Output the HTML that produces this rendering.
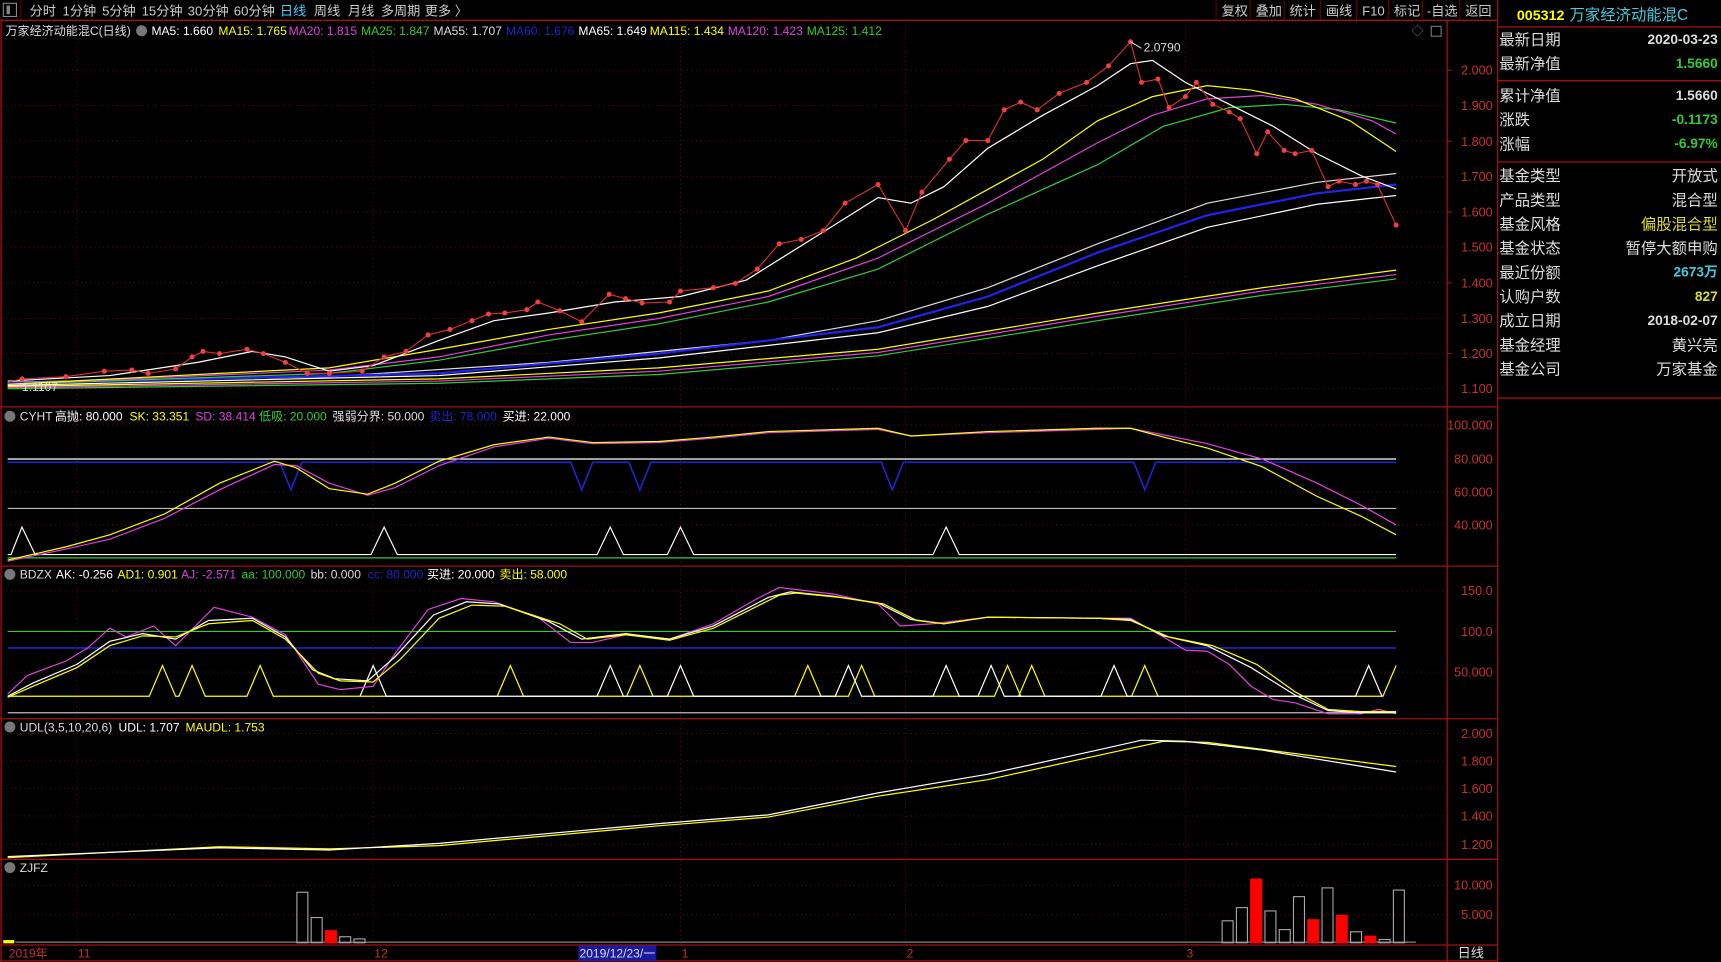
<!DOCTYPE html>
<html><head><meta charset="utf-8"><style>
html,body{margin:0;padding:0;background:#000;width:1721px;height:962px;overflow:hidden}
svg{display:block}
text{font-family:"Liberation Sans","Noto Sans CJK SC",sans-serif}
</style></head><body>
<svg width="1721" height="962" viewBox="0 0 1568 876" preserveAspectRatio="none" xmlns="http://www.w3.org/2000/svg">
<rect width="1568" height="876" fill="#000"/>
<!-- top bar -->
<rect x="0" y="0" width="1364" height="18" fill="#000"/>
<rect x="3" y="3" width="12" height="12" fill="none" stroke="#888" stroke-width="1"/>
<rect x="6" y="5" width="3" height="8" fill="#888"/>
<line x1="19" y1="0" x2="19" y2="18" stroke="#600"/>
<g font-size="12" fill="#ccc">
<text x="27" y="14">分时</text><text x="57" y="14">1分钟</text><text x="93" y="14">5分钟</text><text x="129" y="14">15分钟</text><text x="171" y="14">30分钟</text><text x="213" y="14">60分钟</text>
<text x="255" y="14" fill="#4cf">日线</text><text x="286" y="14">周线</text><text x="317" y="14">月线</text><text x="347" y="14">多周期</text><text x="387" y="14">更多 〉</text>
<text x="1113" y="14">复权</text><text x="1144" y="14">叠加</text><text x="1175" y="14">统计</text><text x="1208" y="14">画线</text><text x="1241" y="14">F10</text><text x="1270" y="14">标记</text><text x="1300" y="14">-自选</text><text x="1335" y="14">返回</text>
</g>
<g stroke="#600"><line x1="1108" y1="0" x2="1108" y2="18"/><line x1="1139" y1="0" x2="1139" y2="18"/><line x1="1170" y1="0" x2="1170" y2="18"/><line x1="1203" y1="0" x2="1203" y2="18"/><line x1="1236" y1="0" x2="1236" y2="18"/><line x1="1265" y1="0" x2="1265" y2="18"/><line x1="1296" y1="0" x2="1296" y2="18"/><line x1="1330" y1="0" x2="1330" y2="18"/></g>
<!-- frame lines -->
<g stroke="#a01010" stroke-width="1.2" fill="none">
<line x1="0" y1="18.5" x2="1364" y2="18.5"/>
<line x1="1" y1="18" x2="1" y2="876"/>
<line x1="1318.5" y1="18" x2="1318.5" y2="876"/>
<line x1="1364.5" y1="0" x2="1364.5" y2="876"/>
<line x1="0" y1="370.5" x2="1364" y2="370.5"/>
<line x1="0" y1="515.5" x2="1364" y2="515.5"/>
<line x1="0" y1="654.5" x2="1364" y2="654.5"/>
<line x1="0" y1="782.5" x2="1364" y2="782.5"/>
<line x1="0" y1="860.5" x2="1364" y2="860.5"/>
<line x1="0" y1="875" x2="1364" y2="875"/>
<line x1="1364" y1="24.5" x2="1568" y2="24.5"/>
<line x1="1364" y1="73.5" x2="1568" y2="73.5"/>
<line x1="1364" y1="147.5" x2="1568" y2="147.5"/>
<line x1="1364" y1="362.5" x2="1568" y2="362.5"/>
</g>
<!-- grid -->
<g stroke="#6a1010" stroke-width="0.8" stroke-dasharray="1,3">
<line x1="70" y1="19" x2="70" y2="860"/><line x1="340" y1="19" x2="340" y2="860"/><line x1="620" y1="19" x2="620" y2="860"/><line x1="825" y1="19" x2="825" y2="860"/><line x1="1080" y1="19" x2="1080" y2="860"/>
<line x1="2" y1="64" x2="1318" y2="64"/><line x1="2" y1="96" x2="1318" y2="96"/><line x1="2" y1="128.5" x2="1318" y2="128.5"/><line x1="2" y1="161" x2="1318" y2="161"/><line x1="2" y1="193" x2="1318" y2="193"/><line x1="2" y1="225" x2="1318" y2="225"/><line x1="2" y1="257.5" x2="1318" y2="257.5"/><line x1="2" y1="290" x2="1318" y2="290"/><line x1="2" y1="322" x2="1318" y2="322"/><line x1="2" y1="354" x2="1318" y2="354"/>
<line x1="2" y1="387" x2="1318" y2="387"/><line x1="2" y1="448" x2="1318" y2="448"/><line x1="2" y1="478" x2="1318" y2="478"/>
<line x1="2" y1="538" x2="1318" y2="538"/><line x1="2" y1="612" x2="1318" y2="612"/>
<line x1="2" y1="668" x2="1318" y2="668"/><line x1="2" y1="693" x2="1318" y2="693"/><line x1="2" y1="718" x2="1318" y2="718"/><line x1="2" y1="743" x2="1318" y2="743"/><line x1="2" y1="769" x2="1318" y2="769"/>
<line x1="2" y1="806" x2="1318" y2="806"/><line x1="2" y1="833" x2="1318" y2="833"/>
</g>
<!-- axis labels -->
<g font-size="11.5" fill="#c83030" text-anchor="end">
<text x="1360" y="68">2.000</text><text x="1360" y="100">1.900</text><text x="1360" y="133">1.800</text><text x="1360" y="165">1.700</text><text x="1360" y="197">1.600</text><text x="1360" y="229">1.500</text><text x="1360" y="262">1.400</text><text x="1360" y="294">1.300</text><text x="1360" y="326">1.200</text><text x="1360" y="358">1.100</text>
<text x="1360" y="391">100.000</text><text x="1360" y="422">80.000</text><text x="1360" y="452">60.000</text><text x="1360" y="482">40.000</text>
<text x="1360" y="542">150.0</text><text x="1360" y="579">100.0</text><text x="1360" y="616">50.000</text>
<text x="1360" y="672">2.000</text><text x="1360" y="697">1.800</text><text x="1360" y="722">1.600</text><text x="1360" y="747">1.400</text><text x="1360" y="773">1.200</text>
<text x="1360" y="810">10.000</text><text x="1360" y="837">5.000</text>
</g>
<g stroke="#a01010"><line x1="1318" y1="64" x2="1323" y2="64"/><line x1="1318" y1="128.5" x2="1323" y2="128.5"/><line x1="1318" y1="193" x2="1323" y2="193"/><line x1="1318" y1="257.5" x2="1323" y2="257.5"/><line x1="1318" y1="322" x2="1323" y2="322"/></g>
<!-- bottom axis -->
<g font-size="11" fill="#c83030"><text x="8" y="872">2019年</text><text x="71" y="872">11</text><text x="341" y="872">12</text><text x="621" y="872">1</text><text x="826" y="872">2</text><text x="1081" y="872">3</text></g>
<rect x="527" y="861" width="71" height="14" fill="#1a1aa0"/>
<text x="528" y="872" font-size="11" fill="#ddd">2019/12/23/一</text>
<text x="1328" y="872" font-size="12" fill="#ddd">日线</text>
<!-- main header -->
<g font-size="11">
<text x="5" y="32" fill="#ddd">万家经济动能混C(日线)</text>
<circle cx="129" cy="28" r="5" fill="#777"/>
<text x="138" y="32" fill="#fff">MA5: 1.660</text><text x="199" y="32" fill="#ff0">MA15: 1.765</text><text x="263" y="32" fill="#e040e0">MA20: 1.815</text><text x="329" y="32" fill="#3c3">MA25: 1.847</text><text x="395" y="32" fill="#ddd">MA55: 1.707</text><text x="461" y="32" fill="#22c">MA60: 1.676</text><text x="527" y="32" fill="#fff">MA65: 1.649</text><text x="592" y="32" fill="#ff0">MA115: 1.434</text><text x="663" y="32" fill="#e040e0">MA120: 1.423</text><text x="735" y="32" fill="#3c3">MA125: 1.412</text>
</g>
<text x="1286" y="32" font-size="11" fill="#777">◇</text>
<rect x="1304" y="24" width="9" height="9" fill="none" stroke="#777"/>
<!-- main MAs -->
<g fill="none" stroke-width="1.1">
<polyline stroke="#ff0" points="7,352 400,345 600,335 800,318 1000,285 1150,262 1272,246"/>
<polyline stroke="#e040e0" points="7,353 400,347 600,338 800,321 1000,288 1150,265 1272,250"/>
<polyline stroke="#3c3" points="7,354 400,349 600,341 800,324 1000,292 1150,269 1272,254"/>
<polyline stroke="#ddd" points="7,348 300,343 500,330 700,310 800,292 900,262 1000,222 1100,185 1200,166 1272,158"/>
<polyline stroke="#2222ee" stroke-width="2" points="7,349 400,340 600,322 800,298 900,270 1000,230 1100,196 1200,176 1272,168"/>
<polyline stroke="#fff" points="7,351 400,342 600,326 800,303 900,279 1000,242 1100,207 1200,186 1272,178"/>
<polyline stroke="#3c3" points="7,350 300,340 400,328 500,310 600,295 700,275 800,245 900,195 1000,150 1060,115 1120,98 1170,95 1220,100 1272,112"/>
<polyline stroke="#e040e0" points="7,350 300,337 400,325 500,305 600,290 700,270 800,235 900,185 1000,130 1050,105 1100,90 1150,87 1200,95 1250,110 1272,122"/>
<polyline stroke="#ff0" points="7,350 200,340 300,335 400,318 500,300 600,285 700,265 780,235 850,200 950,145 1000,110 1050,88 1100,78 1140,82 1180,90 1230,110 1272,138"/>
<polyline stroke="#fff" points="7,347 100,342 180,330 230,320 260,325 300,338 340,333 400,310 450,292 500,285 560,275 620,270 680,255 720,230 760,205 800,180 830,185 860,170 900,135 950,105 1000,78 1030,58 1050,55 1080,75 1120,95 1160,115 1200,140 1240,160 1272,172"/>
</g>
<polyline fill="none" stroke="#e03030" stroke-width="1" points="7,348 20,345 60,343 95,338 120,337 135,340 160,336 175,325 185,320 200,322 225,318 240,322 260,330 280,340 300,340 330,338 350,325 370,320 390,305 410,300 430,292 445,286 460,285 480,282 490,275 510,283 530,293 555,268 570,272 585,276 610,275 620,265 650,262 670,258 690,245 710,222 730,218 750,210 770,185 800,168 825,210 840,175 865,145 880,128 900,128 915,100 930,93 945,100 965,85 990,75 1010,60 1030,38 1040,75 1055,72 1065,98 1080,88 1090,75 1105,95 1120,102 1130,108 1145,140 1155,120 1170,137 1180,140 1195,137 1210,170 1220,165 1235,168 1245,165 1255,168 1272,205"/>
<g fill="#f04040">
<circle cx="20" cy="345" r="2.3"/><circle cx="60" cy="343" r="2.3"/><circle cx="95" cy="338" r="2.3"/><circle cx="120" cy="337" r="2.3"/><circle cx="135" cy="340" r="2.3"/><circle cx="160" cy="336" r="2.3"/><circle cx="175" cy="325" r="2.3"/><circle cx="185" cy="320" r="2.3"/><circle cx="200" cy="322" r="2.3"/><circle cx="225" cy="318" r="2.3"/><circle cx="240" cy="322" r="2.3"/><circle cx="260" cy="330" r="2.3"/><circle cx="280" cy="340" r="2.3"/><circle cx="300" cy="340" r="2.3"/><circle cx="330" cy="338" r="2.3"/><circle cx="350" cy="325" r="2.3"/><circle cx="370" cy="320" r="2.3"/><circle cx="390" cy="305" r="2.3"/><circle cx="410" cy="300" r="2.3"/><circle cx="430" cy="292" r="2.3"/><circle cx="445" cy="286" r="2.3"/><circle cx="460" cy="285" r="2.3"/><circle cx="480" cy="282" r="2.3"/><circle cx="490" cy="275" r="2.3"/><circle cx="510" cy="283" r="2.3"/><circle cx="530" cy="293" r="2.3"/><circle cx="555" cy="268" r="2.3"/><circle cx="570" cy="272" r="2.3"/><circle cx="585" cy="276" r="2.3"/><circle cx="610" cy="275" r="2.3"/><circle cx="620" cy="265" r="2.3"/><circle cx="650" cy="262" r="2.3"/><circle cx="670" cy="258" r="2.3"/><circle cx="690" cy="245" r="2.3"/><circle cx="710" cy="222" r="2.3"/><circle cx="730" cy="218" r="2.3"/><circle cx="750" cy="210" r="2.3"/><circle cx="770" cy="185" r="2.3"/><circle cx="800" cy="168" r="2.3"/><circle cx="825" cy="210" r="2.3"/><circle cx="840" cy="175" r="2.3"/><circle cx="865" cy="145" r="2.3"/><circle cx="880" cy="128" r="2.3"/><circle cx="900" cy="128" r="2.3"/><circle cx="915" cy="100" r="2.3"/><circle cx="930" cy="93" r="2.3"/><circle cx="945" cy="100" r="2.3"/><circle cx="965" cy="85" r="2.3"/><circle cx="990" cy="75" r="2.3"/><circle cx="1010" cy="60" r="2.3"/><circle cx="1030" cy="38" r="2.3"/><circle cx="1040" cy="75" r="2.3"/><circle cx="1055" cy="72" r="2.3"/><circle cx="1065" cy="98" r="2.3"/><circle cx="1080" cy="88" r="2.3"/><circle cx="1090" cy="75" r="2.3"/><circle cx="1105" cy="95" r="2.3"/><circle cx="1120" cy="102" r="2.3"/><circle cx="1130" cy="108" r="2.3"/><circle cx="1145" cy="140" r="2.3"/><circle cx="1155" cy="120" r="2.3"/><circle cx="1170" cy="137" r="2.3"/><circle cx="1180" cy="140" r="2.3"/><circle cx="1195" cy="137" r="2.3"/><circle cx="1210" cy="170" r="2.3"/><circle cx="1220" cy="165" r="2.3"/><circle cx="1235" cy="168" r="2.3"/><circle cx="1245" cy="165" r="2.3"/><circle cx="1255" cy="168" r="2.3"/><circle cx="1272" cy="205" r="2.3"/>
</g>
<line x1="1030" y1="38" x2="1040" y2="44" stroke="#ddd"/>
<text x="1042" y="47" font-size="11" fill="#ddd">2.0790</text>
<text x="20" y="356" font-size="11" fill="#ddd">1.1107</text>
<!-- CYHT -->
<g font-size="11">
<circle cx="9" cy="379" r="5" fill="#777"/>
<text x="18" y="383" fill="#ddd">CYHT</text><text x="50" y="383" fill="#fff">高抛: 80.000</text><text x="118" y="383" fill="#ff0">SK: 33.351</text><text x="178" y="383" fill="#e040e0">SD: 38.414</text><text x="236" y="383" fill="#3c3">低吸: 20.000</text><text x="303" y="383" fill="#ddd">强弱分界: 50.000</text><text x="391" y="383" fill="#22c">卖出: 78.000</text><text x="458" y="383" fill="#fff">买进: 22.000</text>
</g>
<g fill="none" stroke-width="1.1">
<line x1="7" y1="418" x2="1272" y2="418" stroke="#fff"/>
<polyline stroke="#22c" stroke-width="1.5" points="7,421 255,421 265,446 275,421 520,421 530,446 540,421 573,421 583,446 593,421 803,421 813,446 823,421 1033,421 1043,446 1053,421 1272,421"/>
<line x1="7" y1="463" x2="1272" y2="463" stroke="#bbb"/>
<line x1="7" y1="508" x2="1272" y2="508" stroke="#3c3"/>
<polyline stroke="#fff" points="7,505 10,505 20,480 32,505 338,505 350,480 362,505 544,505 556,480 568,505 608,505 620,480 632,505 850,505 862,480 874,505 1272,505"/>
<polyline stroke="#e040e0" points="7,511 60,500 100,491 150,472 200,446 250,423 270,424 300,440 335,451 360,444 400,424 450,407 500,399 540,404 600,403 650,399 700,394 800,391 830,397 900,394 1000,391 1030,390 1060,396 1100,404 1150,418 1200,440 1240,460 1272,478"/>
<polyline stroke="#ff0" points="7,510 60,498 100,487 150,468 200,440 250,420 270,426 300,445 335,450 360,440 400,420 450,405 500,398 540,403 600,402 650,398 700,393 800,390 830,397 900,393 1000,390 1030,390 1060,398 1100,408 1150,425 1200,452 1240,470 1272,487"/>
</g>
<!-- BDZX -->
<g font-size="11">
<circle cx="9" cy="523" r="5" fill="#777"/>
<text x="18" y="527" fill="#ddd">BDZX</text><text x="51" y="527" fill="#fff">AK: -0.256</text><text x="107" y="527" fill="#ff0">AD1: 0.901</text><text x="165" y="527" fill="#e040e0">AJ: -2.571</text><text x="220" y="527" fill="#3c3">aa: 100.000</text><text x="283" y="527" fill="#ddd">bb: 0.000</text><text x="335" y="527" fill="#22c">cc: 80.000</text><text x="389" y="527" fill="#fff">买进: 20.000</text><text x="455" y="527" fill="#ff0">卖出: 58.000</text>
</g>
<g fill="none" stroke-width="1.1">
<line x1="7" y1="575" x2="1272" y2="575" stroke="#3c3"/>
<line x1="7" y1="590" x2="1272" y2="590" stroke="#22c" stroke-width="1.4"/>
<line x1="7" y1="649" x2="1272" y2="649" stroke="#bbb"/>
<polyline stroke="#ff0" points="7,634 136,634 148,606 160,634 163,634 175,606 187,634 225,634 237,606 249,634 453,634 465,606 477,634 571,634 583,606 595,634 724,634 736,606 748,634 773,634 785,606 797,634 906,634 918,606 930,634 928,634 940,606 952,634 1031,634 1043,606 1055,634 1260,634 1272,606"/>
<polyline stroke="#fff" points="328,634 340,606 352,634 544,634 556,606 568,634 608,634 620,606 632,634 761,634 773,606 785,634 850,634 862,606 874,634 891,634 903,606 915,634 1003,634 1015,606 1027,634 1235,634 1247,606 1259,634"/>
<polyline stroke="#e040e0" points="7,632 25,615 60,602 80,590 100,572 115,580 140,570 160,588 170,578 195,553 230,562 260,578 290,623 310,628 340,625 360,595 390,555 420,545 450,548 490,562 520,585 540,585 570,578 610,582 650,568 690,545 710,535 760,541 800,550 820,570 850,568 900,562 1000,563 1030,563 1060,580 1080,592 1100,593 1120,605 1140,625 1160,637 1180,640 1210,650 1240,650 1256,646 1272,650"/>
<polyline stroke="#fff" points="7,634 30,622 70,605 100,584 130,577 160,582 190,565 230,563 260,580 285,610 305,618 335,620 360,598 395,560 425,548 455,550 500,566 530,582 570,577 610,582 650,570 700,544 720,539 760,543 800,549 830,564 860,568 900,562 1000,563 1030,564 1060,579 1100,588 1140,608 1180,633 1210,647 1240,649 1272,649"/>
<polyline stroke="#ff0" points="7,635 30,625 70,608 100,588 130,579 160,580 190,568 230,565 260,582 290,613 310,620 340,621 365,600 400,563 430,551 460,552 510,568 535,582 570,578 610,583 650,572 710,542 725,540 765,544 805,550 835,565 860,568 900,562 1000,563 1030,565 1065,580 1105,588 1145,605 1180,630 1210,646 1240,648 1272,648"/>
</g>
<!-- UDL -->
<g font-size="11">
<circle cx="9" cy="662" r="5" fill="#777"/>
<text x="18" y="666" fill="#ddd">UDL(3,5,10,20,6)</text><text x="108" y="666" fill="#fff">UDL: 1.707</text><text x="169" y="666" fill="#ff0">MAUDL: 1.753</text>
</g>
<g fill="none" stroke-width="1.1">
<polyline stroke="#ff0" points="7,781 200,771 300,773 400,770 600,752 700,744 800,725 900,710 1000,688 1060,675 1100,676 1272,698"/>
<polyline stroke="#fff" points="7,780 200,772 300,774 400,768 600,750 700,742 800,722 900,705 1000,683 1040,674 1080,675 1150,683 1272,703"/>
</g>
<!-- ZJFZ -->
<g font-size="11">
<circle cx="9" cy="790" r="5" fill="#777"/>
<text x="18" y="794" fill="#ddd">ZJFZ</text>
</g>
<rect x="3" y="856" width="10" height="3" fill="#ff0"/>
<line x1="14" y1="858" x2="1290" y2="858" stroke="#666" stroke-width="1.5"/>
<g fill="none" stroke="#aaa" stroke-width="1">
<rect x="270.5" y="812.5" width="10" height="46"/><rect x="283.5" y="835.5" width="10" height="23"/><rect x="309.5" y="853" width="10" height="5.5"/><rect x="322.5" y="855" width="10" height="3.5"/>
<rect x="1113.5" y="838.5" width="10" height="20"/><rect x="1126.5" y="826.5" width="10" height="32"/><rect x="1152.5" y="829.5" width="10" height="29"/><rect x="1165.5" y="846.5" width="10" height="12"/><rect x="1178.5" y="816.5" width="10" height="42"/><rect x="1204.5" y="808.5" width="10" height="50"/><rect x="1230.5" y="848.5" width="10" height="10"/><rect x="1256.5" y="855.5" width="10" height="3"/><rect x="1269.5" y="810.5" width="10" height="48"/>
</g>
<g fill="#f00">
<rect x="296" y="847" width="11" height="12"/>
<rect x="1139" y="800" width="11" height="59"/><rect x="1191" y="837" width="11" height="22"/><rect x="1217" y="833" width="11" height="26"/><rect x="1243" y="852" width="11" height="7"/>
</g>
<!-- right panel -->
<text x="1382" y="18" font-size="13" font-weight="bold" fill="#ff0">005312</text>
<text x="1430" y="18" font-size="14" fill="#4cd">万家经济动能混C</text>
<g font-size="14" fill="#ddd">
<text x="1366" y="41">最新日期</text><text x="1366" y="63">最新净值</text><text x="1366" y="92">累计净值</text><text x="1366" y="114">涨跌</text><text x="1366" y="136">涨幅</text>
<text x="1366" y="165">基金类型</text><text x="1366" y="187">产品类型</text><text x="1366" y="209">基金风格</text><text x="1366" y="231">基金状态</text><text x="1366" y="253">最近份额</text><text x="1366" y="275">认购户数</text><text x="1366" y="297">成立日期</text><text x="1366" y="319">基金经理</text><text x="1366" y="341">基金公司</text>
</g>
<g font-size="12.5" font-weight="bold" text-anchor="end">
<text x="1565" y="40" fill="#ddd">2020-03-23</text><text x="1565" y="62" fill="#3c3">1.5660</text><text x="1565" y="91" fill="#ddd">1.5660</text><text x="1565" y="113" fill="#3c3">-0.1173</text><text x="1565" y="135" fill="#3c3">-6.97%</text>
<text x="1565" y="252" fill="#4cd">2673万</text><text x="1565" y="274" fill="#dd3">827</text><text x="1565" y="296" fill="#ddd">2018-02-07</text>
</g>
<g font-size="14" text-anchor="end" fill="#ddd">
<text x="1565" y="165">开放式</text><text x="1565" y="187">混合型</text><text x="1565" y="209" fill="#dd3">偏股混合型</text><text x="1565" y="231">暂停大额申购</text><text x="1565" y="319">黄兴亮</text><text x="1565" y="341">万家基金</text>
</g>
</svg>
</body></html>
